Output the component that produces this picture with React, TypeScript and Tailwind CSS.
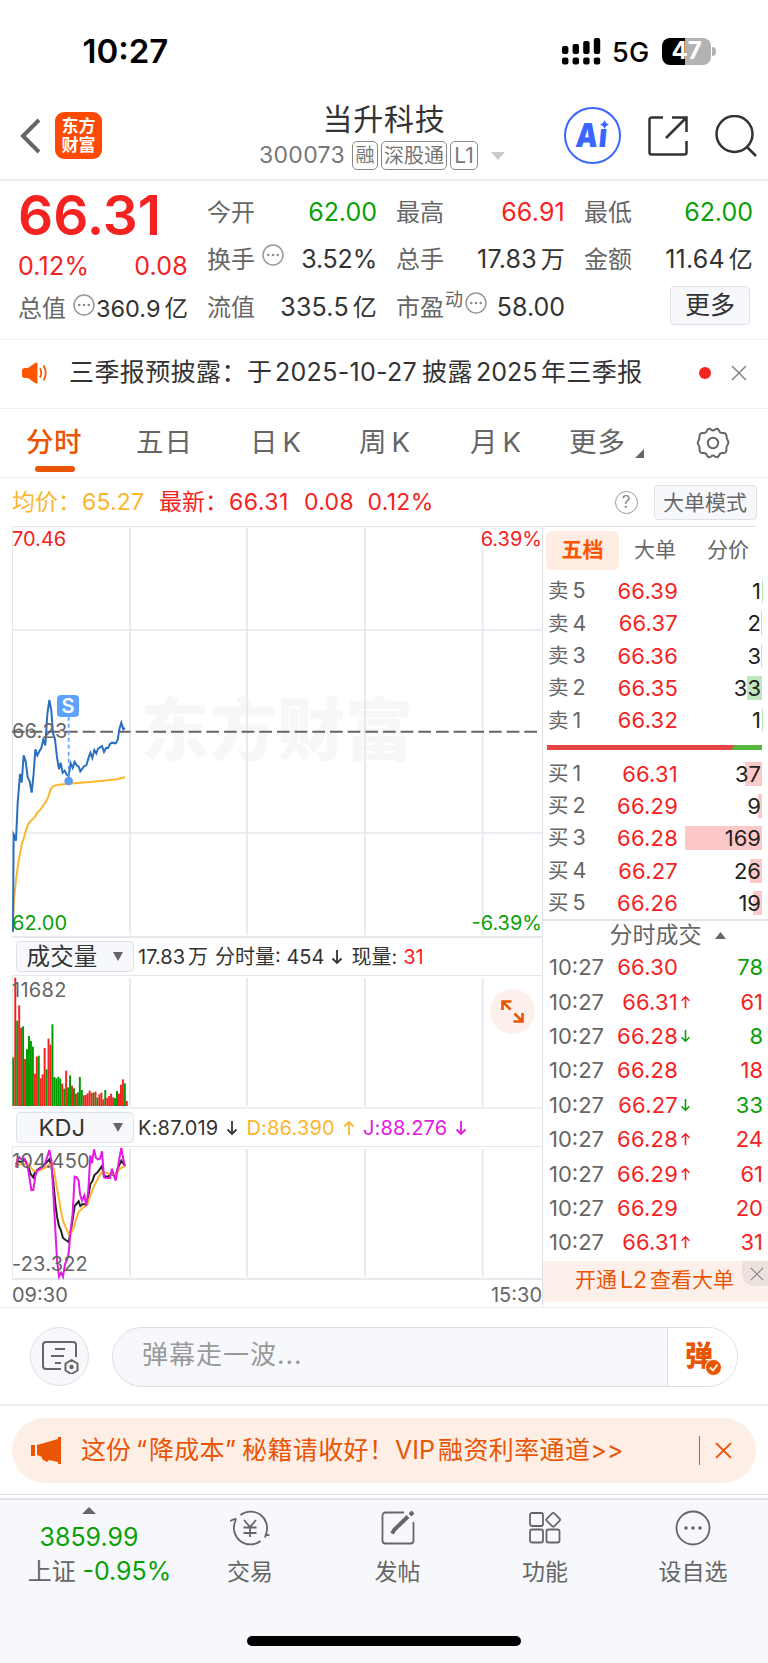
import React from "react";

const pricePoints =
  "39,1235 41,943 45,950 48,962 53,850 60,762 65,788 71,706 77,724 83,772 89,784 95,818 101,760 106,688 112,706 118,694 124,684 130,658 136,676 142,582 148,540 154,572 159,640 165,658 171,712 177,748 182,728 188,758 194,752 200,764 206,768 212,730 218,744 224,726 230,736 236,740 241,754 247,746 253,738 259,736 265,716 271,698 277,714 283,690 289,700 294,686 306,678 312,696 318,684 324,684 330,672 336,668 347,670 353,660 358,628 364,608 370,628 375,624";

const averagePoints =
  "38,1205 42,1140 48,1080 54,1035 60,1000 66,970 72,952 78,930 84,914 90,904 98,898 104,892 112,878 122,868 130,856 136,848 144,832 152,808 158,800 166,796 176,794 206,791 240,788 270,786 310,782 350,778 364,774 375,772";

const kPoints =
  "48,703 54,694 65,696 75,690 84,706 92,732 100,742 106,724 118,716 132,706 148,688 154,706 160,756 166,820 171,860 177,888 183,902 189,924 197,930 206,936 212,904 218,868 224,828 236,814 241,828 248,822 259,824 265,800 271,762 277,754 283,736 295,724 306,708 312,738 324,740 334,732 346,738 353,716 364,692 375,708";

const dPoints =
  "48,706 66,702 84,702 100,722 110,724 132,716 148,704 156,702 162,720 170,770 177,808 183,842 189,872 197,892 206,912 213,910 220,896 230,862 236,846 248,834 262,824 270,800 283,766 300,734 306,724 330,732 346,734 358,718 366,712 375,708";

const jPoints =
  "48,712 52,690 58,682 66,690 72,686 82,706 88,740 94,780 100,780 106,738 112,722 124,714 132,708 142,680 148,660 154,690 160,790 165,880 171,990 177,1040 183,1028 189,1040 195,1002 201,990 206,970 212,900 218,850 224,740 230,742 236,752 240,792 246,812 253,796 259,828 265,780 271,676 276,700 282,658 288,684 294,688 300,686 306,664 312,742 318,744 330,744 336,716 341,734 347,752 353,716 358,686 364,654 370,688 375,708";

// [color, top] of every one-minute bar
const volumes: [string, number][] = [
  ["g", 382], ["r", 143], ["g", 272], ["r", 226], ["r", 293], ["g", 289],
  ["r", 387], ["g", 358], ["g", 318], ["g", 333], ["g", 350], ["r", 431],
  ["r", 380], ["g", 377], ["r", 445], ["r", 433], ["r", 354], ["g", 418],
  ["r", 326], ["r", 344], ["g", 283], ["g", 441], ["g", 445], ["g", 440],
  ["g", 446], ["r", 461], ["g", 476], ["r", 422], ["g", 472], ["g", 436],
  ["r", 467], ["g", 475], ["r", 491], ["g", 487], ["g", 441], ["g", 480],
  ["r", 496], ["r", 495], ["r", 490], ["r", 482], ["r", 488], ["g", 488],
  ["r", 485], ["g", 503], ["r", 493], ["r", 488], ["r", 508], ["g", 480],
  ["r", 504], ["r", 498], ["r", 491], ["r", 502], ["g", 504], ["g", 483],
  ["r", 491], ["r", 464], ["r", 448], ["g", 460], ["r", 513],
];

const sells = [
  { name: "卖5", price: "66.39", qty: "1", bar: 0.5 },
  { name: "卖4", price: "66.37", qty: "2", bar: 1 },
  { name: "卖3", price: "66.36", qty: "3", bar: 1 },
  { name: "卖2", price: "66.35", qty: "33", bar: 15 },
  { name: "卖1", price: "66.32", qty: "1", bar: 0.5 },
];

const buys = [
  { name: "买1", price: "66.31", qty: "37", bar: 17 },
  { name: "买2", price: "66.29", qty: "9", bar: 4 },
  { name: "买3", price: "66.28", qty: "169", bar: 77 },
  { name: "买4", price: "66.27", qty: "26", bar: 12 },
  { name: "买5", price: "66.26", qty: "19", bar: 9 },
];

const ticks = [
  { price: "66.30", dir: "", qty: "78", sell: true },
  { price: "66.31", dir: "up", qty: "61", sell: false },
  { price: "66.28", dir: "down", qty: "8", sell: true },
  { price: "66.28", dir: "", qty: "18", sell: false },
  { price: "66.27", dir: "down", qty: "33", sell: true },
  { price: "66.28", dir: "up", qty: "24", sell: false },
  { price: "66.29", dir: "up", qty: "61", sell: false },
  { price: "66.29", dir: "", qty: "20", sell: false },
  { price: "66.31", dir: "up", qty: "31", sell: false },
];

const More = () => (
  <svg className="h-[22px] w-[22px] shrink-0" viewBox="0 0 22 22" fill="none">
    <circle cx="11" cy="11" r="10" stroke="#999" strokeWidth="1.5" />
    <circle cx="6.3" cy="11" r="1.2" fill="#888" />
    <circle cx="11" cy="11" r="1.2" fill="#888" />
    <circle cx="15.7" cy="11" r="1.2" fill="#888" />
  </svg>
);

const Arrow = ({ up, className }: { up?: boolean; className: string }) => (
  <svg className={className} viewBox="0 0 12 16" fill="none" stroke="currentColor" strokeWidth="1.8">
    {up ? <path d="M6 15V2M1.5 6.5L6 2l4.5 4.5" /> : <path d="M6 1v13M1.5 9.5L6 14l4.5-4.5" />}
  </svg>
);

const Cross = ({ className }: { className: string }) => (
  <svg className={className} viewBox="0 0 16 16" fill="none" stroke="currentColor">
    <path d="M1 1l14 14M15 1L1 15" />
  </svg>
);

const StatusBar = () => (
  <div className="flex h-[92px] items-start justify-between pl-[82.5px] pr-[52px] pt-[34px] text-black">
    <div className="text-[33px] font-semibold leading-[35px]">10:27</div>
    <div className="flex h-[34px] items-center">
      <svg className="h-[28px] w-[40px]" viewBox="0 0 40 28">
        <rect x="1" y="9" width="6.4" height="8" rx="2" />
        <rect x="11.6" y="7" width="6.4" height="10" rx="2" />
        <rect x="22.2" y="4" width="6.4" height="13" rx="2" />
        <rect x="32.8" y="1" width="6.4" height="16" rx="2" />
        <rect x="1" y="20.5" width="6.4" height="7" rx="2" />
        <rect x="11.6" y="20.5" width="6.4" height="7" rx="2" />
        <rect x="22.2" y="20.5" width="6.4" height="7" rx="2" />
        <rect x="32.8" y="20.5" width="6.4" height="7" rx="2" />
      </svg>
      <span className="ml-[11px] w-[50px] pt-[2px] text-[27px] font-medium leading-none tracking-[0.4px]">5G</span>
      <div className="flex h-[27px] w-[49px] items-center justify-center rounded-[8px] bg-[linear-gradient(90deg,#000_47%,#b3b3b3_47%)] text-[24px] font-bold leading-none text-white">
        47
      </div>
      <div className="ml-px h-[9px] w-[4px] rounded-r-full bg-[#b3b3b3]"></div>
    </div>
  </div>
);

const Header = () => (
  <div className="flex h-[89px] items-center border-b-2 border-[#ebebeb] pl-[20px]">
    <svg className="h-[36px] w-[22px]" viewBox="0 0 22 36" fill="none" stroke="#666" strokeWidth="4">
      <path d="M19 2L3 18l16 16" />
    </svg>
    <div className="ml-[13px] flex h-[47px] w-[47px] flex-col items-center justify-center rounded-[9px] bg-[#ff4a05] text-[17px] font-bold leading-[19px] text-white">
      <span>东方</span>
      <span>财富</span>
    </div>
    <div className="ml-[157px] flex w-[250px] flex-col items-center">
      <div className="text-[30px] leading-[40px] tracking-[0.8px] text-[#333]">当升科技</div>
      <div className="flex h-[34px] items-center self-start text-[23px] leading-none text-[#777]">
        <span className="w-[93px] tracking-[0.3px]">300073</span>
        <span className="flex h-[29px] w-[26px] items-center justify-center rounded-[5px] border border-[#888] text-[19px]">融</span>
        <span className="ml-[3px] flex h-[29px] w-[66px] items-center justify-center rounded-[5px] border border-[#888] text-[20px]">深股通</span>
        <span className="ml-[3px] flex h-[29px] w-[28px] items-center justify-center rounded-[5px] border border-[#888] text-[21px]">L1</span>
        <svg className="ml-[13px] h-[8px] w-[14px]" viewBox="0 0 14 8" fill="#ccc">
          <path d="M0 0h14L7 8z" />
        </svg>
      </div>
    </div>
    <div className="relative ml-[55px] flex h-[57px] w-[57px] items-center justify-center rounded-full border-[2.5px] border-[#3a66ff] text-[#3a66ff]">
      <span className="-ml-[2px] inline-block -skew-x-6 scale-x-[0.84] text-[33px] font-black leading-none tracking-[1px]">Aı</span>
      <svg className="absolute left-[34px] top-[11px] h-[9px] w-[9px]" viewBox="0 0 9 9" fill="#3a66ff">
        <path d="M4.5 0Q5.5 3.5 9 4.5Q5.5 5.5 4.5 9Q3.5 5.5 0 4.5Q3.5 3.5 4.5 0z" />
      </svg>
    </div>
    <svg className="ml-[26px] h-[42px] w-[42px]" viewBox="0 0 42 42" fill="none" stroke="#333" strokeWidth="2.5">
      <path d="M16 2.5H4.5a2 2 0 0 0-2 2v33a2 2 0 0 0 2 2h33a2 2 0 0 0 2-2V26M25 2.5h14.500V17M39.500 2.500L19 23" />
    </svg>
    <svg className="ml-[26px] h-[42px] w-[42px]" viewBox="0 0 42 42" fill="none" stroke="#333" strokeWidth="2.5">
      <circle cx="19.5" cy="19" r="18" />
      <path d="M32 32l9 9" />
    </svg>
  </div>
);

const Quote = () => (
  <div className="grid h-[159px] grid-cols-[170px_170px_169px_169px] gap-x-[19px] border-b border-[#eee] pl-[18px] pt-[8px] text-[24px] text-[#333]">
    <div>
      <div className="h-[54px] text-[55px] font-semibold leading-[52px] text-[#f52222]">66.31</div>
      <div className="flex h-[48px] items-center justify-between text-[25px] tracking-[0.2px] text-[#f52222]">
        <span>0.12%</span>
        <span>0.08</span>
      </div>
      <div className="flex h-[36px] items-center whitespace-nowrap">
        <span className="text-[#666]">总值</span>
        <span className="mb-2 ml-[7px]"><More /></span>
        <span className="ml-auto text-[23.5px]">360.9<span className="ml-1">亿</span></span>
      </div>
    </div>
    <div>
      <div className="flex h-[47px] items-center justify-between">
        <span className="text-[#666]">今开</span>
        <span className="text-[25px]  text-[#0aa00a]">62.00</span>
      </div>
      <div className="flex h-[48px] items-center">
        <span className="text-[#666]">换手</span>
        <span className="mb-[10px] ml-[7px]"><More /></span>
        <span className="ml-auto text-[25px] tracking-[-0.2px]">3.52%</span>
      </div>
      <div className="flex h-[47px] items-center justify-between">
        <span className="text-[#666]">流值</span>
        <span className="text-[25px] tracking-[0.2px]">335.5<span className="ml-1 text-[24px]">亿</span></span>
      </div>
    </div>
    <div>
      <div className="flex h-[47px] items-center justify-between">
        <span className="text-[#666]">最高</span>
        <span className="text-[25px] tracking-[0.2px] text-[#f52222]">66.91</span>
      </div>
      <div className="flex h-[48px] items-center justify-between">
        <span className="text-[#666]">总手</span>
        <span className="text-[25px] tracking-[0.2px]">17.83<span className="ml-1 text-[24px]">万</span></span>
      </div>
      <div className="flex h-[47px] items-center whitespace-nowrap">
        <span className="text-[#666]">市盈</span>
        <span className="mb-4 ml-[1px] text-[18px] text-[#666]">动</span>
        <span className="mb-[9px] ml-[2px]"><More /></span>
        <span className="ml-auto text-[25px]">58.00</span>
      </div>
    </div>
    <div>
      <div className="flex h-[47px] items-center justify-between">
        <span className="text-[#666]">最低</span>
        <span className="text-[25px] text-[#0aa00a]">62.00</span>
      </div>
      <div className="flex h-[48px] items-center justify-between">
        <span className="text-[#666]">金额</span>
        <span className="text-[25px] tracking-[0.2px]">11.64<span className="ml-1 text-[24px]">亿</span></span>
      </div>
      <div className="ml-auto mr-[3px] mt-[2px] flex h-[39px] w-[80px] items-center justify-center rounded-[4px] border border-[#dfe2e8] bg-[#f7f8fb] text-[25px] leading-none">
        更多
      </div>
    </div>
  </div>
);

const Notice = () => (
  <div className="flex h-[69px] items-center border-b border-[#eee] pb-[2px] pl-[22px] text-[25px] text-[#333]">
    <svg className="h-[22px] w-[26px]" viewBox="0 0 26 22" fill="#ff5500">
      <path d="M0 8.5Q0 6 3 6h3L13 1q2.500-1.500 2.500 1v18q0 2.500-2.500 1L6 16H3Q0 16 0 13.500z" />
      <path d="M18 6.5q2.500 4.500 0 9M21.500 3.500q4.500 7.500 0 15" fill="none" stroke="#ff5500" strokeWidth="1.8" />
    </svg>
    <div className="ml-[21px] flex w-[580px] whitespace-nowrap">
      <span className="w-[178px] tracking-[0.4px]">三季报预披露：</span>
      <span className="w-[28px]">于</span>
      <span className="w-[147px] tracking-[0.3px]">2025-10-27</span>
      <span className="w-[54px] tracking-[0.4px]">披露</span>
      <span className="w-[65px]">2025</span>
      <span className="tracking-[0.4px]">年三季报</span>
    </div>
    <div className="ml-[50px] h-[12px] w-[12px] rounded-full bg-[#f52222]"></div>
    <Cross className="ml-[20px] h-[16px] w-[16px] stroke-[1.6] text-[#888]" />
  </div>
);

const Tabs = () => (
  <div className="flex h-[69px] border-b border-[#eee] pl-[26px] text-[27.5px] leading-[67px] text-[#666]">
    <div className="w-[110px] font-medium tracking-[0.5px] text-[#ea5504]">
      <div className="h-[57px]">分时</div>
      <div className="ml-[9px] h-[6px] w-[40px] rounded-full bg-[#ea5504]"></div>
    </div>
    <div className="w-[114px] tracking-[1px]">五日</div>
    <div className="w-[109px]">日<span className="ml-[5px]">K</span></div>
    <div className="w-[111px]">周<span className="ml-[5px]">K</span></div>
    <div className="w-[99px]">月<span className="ml-[5px]">K</span></div>
    <div className="flex w-[127px] tracking-[1px]">
      更多
      <svg className="ml-[9px] mt-[40px] h-[9px] w-[9px]" viewBox="0 0 9 9" fill="#666">
        <path d="M9 0v9H0z" />
      </svg>
    </div>
    <svg className="mt-[17px] h-[34px] w-[34px]" viewBox="0 0 34 34" fill="none" stroke="#666" strokeWidth="2">
      <path d="M11 4.5Q12.500 1.500 15 3.500Q17 5.500 19 3.500Q21.500 1.500 23 4.500Q24 7.500 27 7Q30 6.500 30.500 10Q30.500 13 32 15Q33 17 31.500 19Q30 21 30.500 24Q30 27.500 27 27Q24 26.500 23 29.500Q21.500 32.500 19 30.500Q17 28.500 15 30.500Q12.500 32.500 11 29.500Q10 26.500 7 27Q4 27.500 3.500 24Q4 21 2.500 19Q1 17 2.500 15Q3.500 13 3.500 10Q4 6.500 7 7Q10 7.500 11 4.500z" />
      <circle cx="17" cy="17" r="5.2" />
    </svg>
  </div>
);

const Summary = () => (
  <div className="flex h-[48px] items-center pl-[12px] text-[23px] whitespace-nowrap text-[#f52222]">
    <span className="w-[70px] text-[#fdb52e]">均价：</span>
    <span className="w-[77px] tracking-[0.2px] text-[#fdb52e]">65.27</span>
    <span className="w-[70px]">最新：</span>
    <span className="w-[75px] tracking-[0.5px]">66.31</span>
    <span className="w-[63.5px] tracking-[0.3px]">0.08</span>
    <span className="w-[247px] tracking-[0.3px]">0.12%</span>
    <span className="flex h-[23px] w-[23px] items-center justify-center rounded-full border-[1.5px] border-[#999] text-[17px] leading-none text-[#888]">?</span>
    <span className="ml-[16px] flex h-[35px] w-[103px] items-center justify-center rounded-[4px] border border-[#dfe2e8] bg-[#f7f8fb] text-[21px] leading-none text-[#666]">
      大单模式
    </span>
  </div>
);

const Select = ({ label }: { label: string }) => (
  <div className="flex h-[31px] w-[118px] items-center rounded-[4px] border border-[#dfe2e8] bg-[#f7f8fb] pr-[10px] text-[23.5px] leading-none text-[#333]">
    <span className="flex-1 pr-[6px] text-center tracking-[0.2px]">{label}</span>
    <svg className="h-[9px] w-[10px]" viewBox="0 0 10 9" fill="#666">
      <path d="M0 0h10L5 9z" />
    </svg>
  </div>
);

const Charts = () => (
  <div className="w-[542px] pl-[12px] text-[20px] leading-none text-[#666]">
    <div className="relative h-[412px]">
      <div className="absolute left-[129px] top-[168px] text-[68px] font-black leading-[72px] whitespace-nowrap text-[#f7f7f7]">东方财富</div>
      <svg className="absolute inset-0 h-full w-full" viewBox="36 18 1590 1236" fill="none">
        <path d="M36 20H1626M37 20V1244" stroke="#dfe2e8" strokeWidth="3" />
        <path d="M36 1251H1626" stroke="#dfe2e8" strokeWidth="5" />
        <path d="M36 330H1626M36 939H1626M390 24V1245M741 24V1245M1095 24V1245M1448 24V1245" stroke="#e6e8ef" strokeWidth="5" />
        <path d="M36 635H1622" stroke="#666" strokeWidth="6" strokeDasharray="38 15" />
        <polyline points={averagePoints} stroke="#fdb52e" strokeWidth="6" />
        <polyline points={pricePoints} stroke="#2b6fc0" strokeWidth="6" />
        <path d="M206 590V775" stroke="#5ea1ff" strokeWidth="5" strokeDasharray="12 9" />
        <circle cx="206" cy="783" r="13" fill="#5e9df5" />
      </svg>
      <div className="absolute left-[45px] top-[169px] flex h-[22px] w-[22px] items-center justify-center rounded-[4px] bg-[#5ea1ff] text-[20px] font-semibold text-white">S</div>
      <span className="absolute left-0 top-[3px] text-[#f52222]">70.46</span>
      <span className="absolute right-0 top-[3px] text-[#f52222]">6.39%</span>
      <span className="absolute left-0 top-[195px] tracking-[0.2px]">66.23</span>
      <span className="absolute left-0 top-[387px] text-[#0aa00a]">62.00</span>
      <span className="absolute right-0 top-[387px] text-[#0aa00a]">-6.39%</span>
    </div>
    <div className="flex h-[37px] items-center pl-[4px] text-[20px] whitespace-nowrap text-[#333]">
      <Select label="成交量" />
      <span className="ml-[4px]">17.83<span className="ml-[3px]">万</span></span>
      <span className="ml-[7px]">分时量: 454</span>
      <Arrow className="ml-[7px] h-[16px] w-[12px]" />
      <span className="ml-[8px]">现量:</span>
      <span className="ml-[6px] text-[#f52222]">31</span>
    </div>
    <div className="relative h-[134px]">
      <svg className="absolute inset-0 h-full w-full" viewBox="36 135 1590 402" fill="none">
        <path d="M36 136H1626M37 136V528M36 534H1626" stroke="#dfe2e8" strokeWidth="3" />
        <path d="M390 144V528M741 144V528M1095 144V528M1448 144V528" stroke="#e6e8ef" strokeWidth="5" />
        {volumes.map(([color, top], i) => (
          <rect key={i} x={37 + i * 5.87} y={top} width="5.87" height={528 - top} fill={color === "r" ? "#f52222" : "#009b00"} />
        ))}
      </svg>
      <span className="absolute left-0 top-[5px] tracking-[0.3px]">11682</span>
      <div className="absolute right-[7px] top-[14px] flex h-[45px] w-[45px] items-center justify-center rounded-full bg-[#fdf0ea]">
        <svg className="h-[23px] w-[23px]" viewBox="0 0 23 23" fill="none" stroke="#ea5504" strokeWidth="2.6">
          <path d="M1.5 10V1.5h9M1.5 1.5l8 8M21.5 13v8.500h-9M21.500 21.500l-8-8" />
        </svg>
      </div>
    </div>
    <div className="flex h-[37px] items-center pl-[4px] text-[20px] whitespace-nowrap text-[#333]">
      <Select label="KDJ" />
      <span className="ml-[4px] tracking-[0.2px]">K:87.019</span>
      <Arrow className="ml-[8px] h-[16px] w-[12px]" />
      <span className="ml-[8px] tracking-[0.2px] text-[#fdb52e]">D:86.390</span>
      <Arrow up className="ml-[8px] h-[16px] w-[12px] text-[#fdb52e]" />
      <span className="ml-[8px] tracking-[0.2px] text-[#e31ae3]">J:88.276</span>
      <Arrow className="ml-[8px] h-[16px] w-[12px] text-[#e31ae3]" />
    </div>
    <div className="relative h-[134px]">
      <svg className="absolute inset-0 h-full w-full" viewBox="36 648 1590 402" fill="none">
        <path d="M36 649H1626M37 649V1041" stroke="#dfe2e8" strokeWidth="3" />
        <path d="M36 1047H1626" stroke="#dfe2e8" strokeWidth="5" />
        <path d="M390 657V1041M741 657V1041M1095 657V1041M1448 657V1041" stroke="#e6e8ef" strokeWidth="5" />
        <polyline points={kPoints} stroke="#222" strokeWidth="6" />
        <polyline points={dPoints} stroke="#fdb52e" strokeWidth="6" />
        <polyline points={jPoints} stroke="#e31ae3" strokeWidth="6" />
      </svg>
      <span className="absolute left-0 top-[5px] tracking-[0.2px]">104.450</span>
      <span className="absolute bottom-[6px] left-0 tracking-[0.2px]">-23.322</span>
    </div>
    <div className="flex h-[28px] items-center justify-between pt-px">
      <span>09:30</span>
      <span>15:30</span>
    </div>
  </div>
);

const BookRow = ({ row, sell }: { row: { name: string; price: string; qty: string; bar: number }; sell?: boolean }) => (
  <div className="flex h-[32.3px] items-center text-[22px] leading-none">
    <span className="w-[56px] text-[20.5px] text-[#666]">{row.name[0]}<span className="ml-[4px] text-[21.5px]">{row.name[1]}</span></span>
    <span className="w-[74px] whitespace-nowrap text-right tracking-[0.2px] text-[#f52222]">{row.price}</span>
    <span className="relative flex h-[24px] flex-1 items-center justify-end pr-px text-[#222]">
      <span
        className={sell ? "absolute inset-y-0 right-0 bg-[#c0e8c0]" : "absolute inset-y-0 right-0 bg-[#fcc8c8]"}
        style={{ width: row.bar }}
      ></span>
      <span className="relative">{row.qty}</span>
    </span>
  </div>
);

const OrderBook = () => (
  <div className="relative flex-1 border-l border-[#dfe2e8]">
    <div className="mr-[12px] flex h-[49px] items-center border-t border-[#dfe2e8] pb-px pl-[3px] text-[21px] text-[#666]">
      <div className="flex h-[39px] w-[73px] items-center justify-center rounded-[6px] bg-[#ffede4] pb-px font-bold text-[#ff5500]">五档</div>
      <div className="ml-[15px] w-[73px] pb-px">大单</div>
      <div className="w-[44px] pb-px">分价</div>
    </div>
    <div className="pl-[5px] pr-[6px]">
      {sells.map((row) => (
        <BookRow key={row.name} row={row} sell />
      ))}
    </div>
    <div className="mt-[9px] mr-[6px] mb-[7px] ml-[4px] h-[5px] bg-[linear-gradient(120deg,#e64545_86%,#55b53c_86%)]"></div>
    <div className="pl-[5px] pr-[6px]">
      {buys.map((row) => (
        <BookRow key={row.name} row={row} />
      ))}
    </div>
    <div className="flex h-[31px] items-center justify-center border-t-2 border-[#e2e4ea] pl-[24px] text-[23px] leading-none text-[#666]">
      分时成交
      <svg className="ml-[13px] h-[7px] w-[11px]" viewBox="0 0 11 7" fill="#666">
        <path d="M0 7h11L5.5 0z" />
      </svg>
    </div>
    <div className="pl-[6px] pr-[5px]">
      {ticks.map((tick, i) => (
        <div key={i} className="flex h-[34.4px] items-center text-[22px] leading-none text-[#f52222]">
          <span className="w-[56px] text-[#666]">10:27</span>
          <span className="w-[73px] whitespace-nowrap text-right tracking-[0.2px]">{tick.price}</span>
          <span className="ml-[2px] w-[12px]">
            {tick.dir === "up" && <Arrow up className="h-[14px] w-[11px]" />}
            {tick.dir === "down" && <Arrow className="h-[14px] w-[11px] text-[#0aa00a]" />}
          </span>
          <span className={tick.sell ? "flex-1 text-right text-[#0aa00a]" : "flex-1 text-right"}>{tick.qty}</span>
        </div>
      ))}
    </div>
    <div className="relative mt-[2px] flex h-[41px] items-center bg-[#fdf0ea] pb-[4px] pl-[32px] text-[21px] text-[#ea5504]">
      开通<span className="mx-[3px] text-[23px]">L2</span>查看大单
      <div className="absolute right-0 top-0 flex h-[25px] w-[26px] items-center justify-center rounded-bl-[12px] bg-[#ece2dd] pl-[3px]">
        <Cross className="h-[14px] w-[14px] stroke-[1.4] text-[#888]" />
      </div>
    </div>
  </div>
);

const Danmu = () => (
  <div className="flex h-[99px] items-center border-t border-b-2 border-[#ececef] px-[30px] pt-px">
    <div className="flex h-[59px] w-[59px] items-center justify-center rounded-full border border-[#dfdfe6] bg-[#f7f8fb]">
      <svg className="h-[34px] w-[38px]" viewBox="0 0 38 34" fill="none" stroke="#666" strokeWidth="2">
        <path d="M20 29H5a3 3 0 0 1-3-3V5a3 3 0 0 1 3-3h27a3 3 0 0 1 3 3v12" />
        <path d="M14 9h10M10 16h13M14 23h6" />
        <path d="M30.5 20l6 3.500v7l-6 3.500l-6-3.500v-7z" strokeLinejoin="round" />
        <circle cx="30.5" cy="27" r="1.2" fill="#666" />
      </svg>
    </div>
    <div className="ml-[23px] flex h-[60px] w-[626px] overflow-hidden rounded-full border border-[#dddfe5] bg-[#f7f8fb]">
      <div className="flex flex-1 items-center pb-[5px] pl-[29px] text-[26px] tracking-[1px] text-[#999]">弹幕走一波...</div>
      <div className="relative w-[70px] border-l border-[#dddfe5] bg-white">
        <span className="absolute left-[17px] top-[13px] text-[28px] font-black leading-[30px] text-[#ea5504]">弹</span>
        <svg className="absolute left-[37px] top-[31px] h-[17px] w-[17px]" viewBox="0 0 17 17">
          <circle cx="8.5" cy="8.5" r="8" fill="#ea5504" stroke="#fff" />
          <path d="M5 8.5l3 3l4.500-6" fill="none" stroke="#fff" strokeWidth="1.8" />
        </svg>
      </div>
    </div>
  </div>
);

const Promo = () => (
  <div className="flex h-[89px] items-center border-b border-[#dfe2e8] px-[12px]">
    <div className="flex h-[65px] w-full items-center rounded-full bg-[#fdeee6] pt-px pl-[19px] text-[25px] whitespace-nowrap text-[#ea5504]">
      <svg className="h-[27px] w-[31px]" viewBox="0 0 31 27" fill="#ea5504">
        <path d="M0 8h4v11H0zM6 8L27 2V0h3v27h-3v-2l-9-2-2 2-5-3V20L6 18z" />
      </svg>
      <span className="ml-[19px] w-[55px]">这份</span>
      <span className="w-[13px]">“</span>
      <span className="w-[76px] tracking-[0.3px]">降成本</span>
      <span className="w-[17px]">”</span>
      <span className="w-[153px] tracking-[0.4px]">秘籍请收好！</span>
      <span className="w-[43px]">VIP</span>
      <span className="tracking-[0.4px]">融资利率通道</span>
      <span>&gt;&gt;</span>
      <span className="ml-auto h-[29px] w-px bg-[#ea5504]"></span>
      <Cross className="ml-[15px] mr-[24px] h-[17px] w-[17px] stroke-[1.8]" />
    </div>
  </div>
);

const BottomNav = () => (
  <div className="mt-[3px] flex h-[165px] flex-col justify-between border-t-2 border-[#dfe2e8] bg-[#f7f8fb] text-[23px] leading-none text-[#666]">
    <div className="flex pl-[2px]">
      <div className="flex w-[174px] flex-col items-center pt-[7px]">
        <svg className="h-[7px] w-[14px]" viewBox="0 0 14 7" fill="#666">
          <path d="M0 7h14L7 0z" />
        </svg>
        <div className="mt-[11px] text-[25px] text-[#0aa00a]">3859.99</div>
        <div className="mt-[9px] pl-[21px] text-[24px] whitespace-nowrap">
          上证 <span className="text-[25px] text-[#0aa00a]">-0.95%</span>
        </div>
      </div>
      <div className="flex w-[148px] flex-col items-center pt-[8px]">
        <svg className="h-[40px] w-[40px]" viewBox="0 0 40 40" fill="none" stroke="#666" strokeWidth="1.8">
          <path d="M10.5 7A16.500 16.500 0 0 1 36 26l-1 3.500M36 26l3.500 1.500M30.500 33A16.500 16.500 0 0 1 5 14L6 10.500M5 14M6 10.500L0 13" />
          <path d="M14 12l6 7l6-7M13.500 19.500h13M13.500 25h13M20 19.500V29" />
        </svg>
        <span className="mt-[13px]">交易</span>
      </div>
      <div className="flex w-[147px] flex-col items-center pt-[8px]">
        <svg className="h-[40px] w-[40px]" viewBox="0 0 40 40" fill="none" stroke="#666" strokeWidth="1.8">
          <path d="M26 4.5H7.500a3 3 0 0 0-3 3v25a3 3 0 0 0 3 3h25a3 3 0 0 0 3-3V14" />
          <path d="M14 25.5l2.500-4L30 8.500M32 7l3-3" strokeWidth="4" />
        </svg>
        <span className="mt-[13px]">发帖</span>
      </div>
      <div className="flex w-[148px] flex-col items-center pt-[8px]">
        <svg className="h-[40px] w-[40px]" viewBox="0 0 40 40" fill="none" stroke="#666" strokeWidth="1.8">
          <rect x="5" y="5" width="13" height="13" rx="2" />
          <rect x="5" y="21.5" width="13" height="13" rx="2" />
          <rect x="21.5" y="21.5" width="13" height="13" rx="2" />
          <rect x="23" y="6.5" width="10.5" height="10.5" rx="1.5" transform="rotate(45 28.2 11.7)" />
        </svg>
        <span className="mt-[13px]">功能</span>
      </div>
      <div className="flex w-[148px] flex-col items-center pt-[8px]">
        <svg className="h-[40px] w-[40px]" viewBox="0 0 40 40" fill="none" stroke="#666" strokeWidth="1.8">
          <circle cx="20" cy="20" r="16.5" />
          <g fill="#666" stroke="none">
            <circle cx="13" cy="20" r="1.8" />
            <circle cx="20" cy="20" r="1.8" />
            <circle cx="27" cy="20" r="1.8" />
          </g>
        </svg>
        <span className="mt-[13px]">设自选</span>
      </div>
    </div>
    <div className="mb-[17px] ml-[247px] h-[10px] w-[274px] rounded-full bg-black"></div>
  </div>
);

const App = () => {
  return (
    <div className="h-[1663px] w-[768px] overflow-hidden bg-white font-['Inter','Noto_Sans_CJK_SC',sans-serif]">
      <StatusBar />
      <Header />
      <Quote />
      <Notice />
      <Tabs />
      <Summary />
      <div className="flex h-[781px]">
        <Charts />
        <OrderBook />
      </div>
      <Danmu />
      <Promo />
      <BottomNav />
    </div>
  );
};

export default App;
